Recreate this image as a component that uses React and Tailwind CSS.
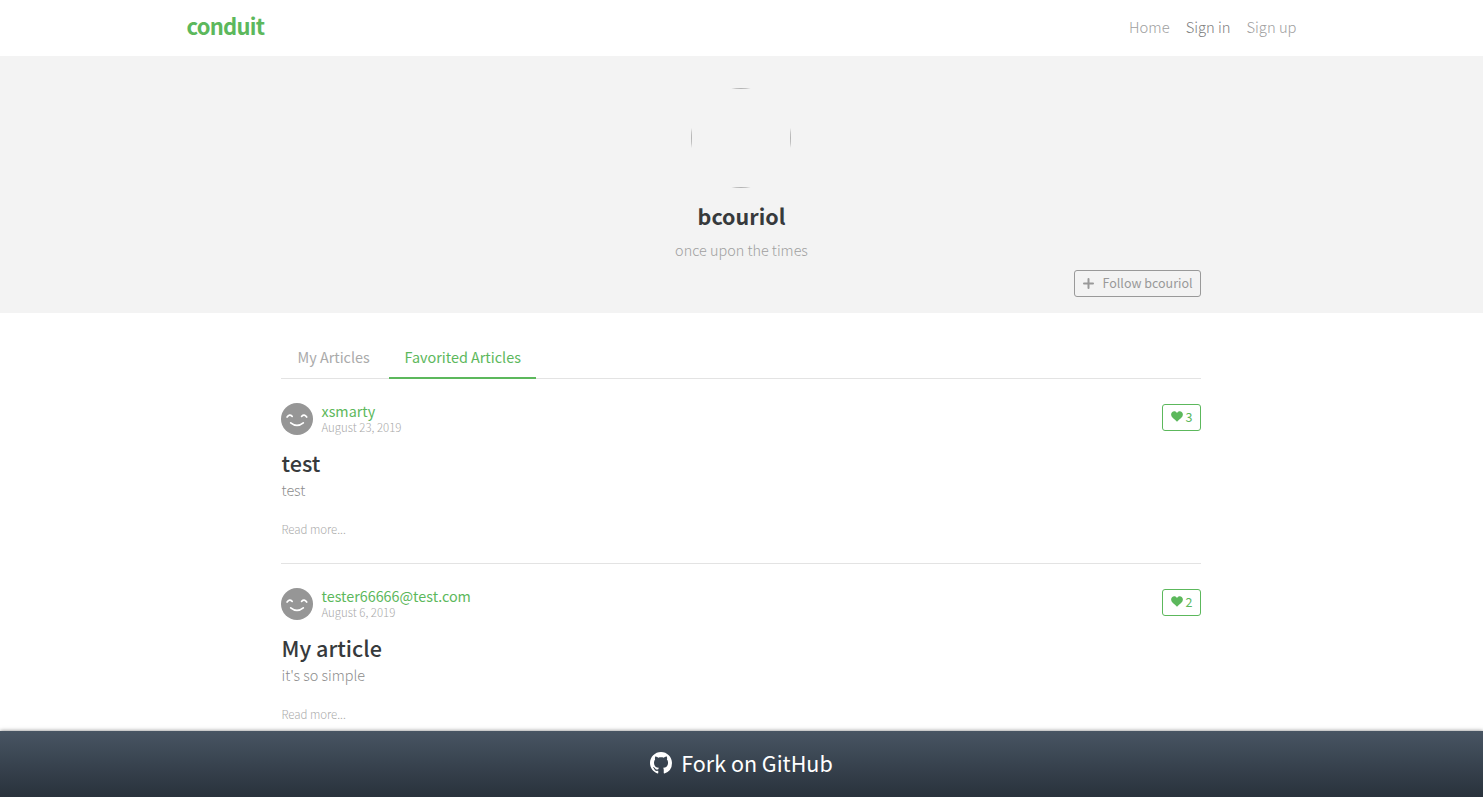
import React from 'react';

function GitHubMark() {
  return (
    <svg viewBox="0 0 16 16" fill="currentColor" className="-mt-[3px] ml-px mr-[9px] h-[22px] w-[22px]">
      <path d="M8 0C3.58 0 0 3.58 0 8c0 3.54 2.29 6.53 5.47 7.59.4.07.55-.17.55-.38 0-.19-.01-.82-.01-1.49-2.01.37-2.53-.49-2.69-.94-.09-.23-.48-.94-.82-1.13-.28-.15-.68-.52-.01-.53.63-.01 1.08.58 1.23.82.72 1.21 1.87.87 2.33.66.07-.52.28-.87.51-1.07-1.78-.2-3.64-.89-3.64-3.95 0-.87.31-1.59.82-2.15-.08-.2-.36-1.02.08-2.12 0 0 .67-.21 2.2.82.64-.18 1.32-.27 2-.27.68 0 1.36.09 2 .27 1.53-1.04 2.2-.82 2.2-.82.44 1.1.16 1.92.08 2.12.51.56.82 1.27.82 2.15 0 3.07-1.87 3.75-3.65 3.95.29.25.54.73.54 1.48 0 1.07-.01 1.93-.01 2.2 0 .21.15.46.55.38A8.013 8.013 0 0016 8c0-4.42-3.58-8-8-8z" />
    </svg>
  );
}

function Smiley() {
  return (
    <svg viewBox="0 0 32 32" className="block h-8 w-8 shrink-0">
      <circle cx="16" cy="16" r="16" fill="#969696" />
      <g fill="none" stroke="#fff" strokeWidth="1.7" strokeLinecap="round">
        <path d="M6.1 14 Q8.4 10.7 11.2 13.3" />
        <path d="M20.6 13.3 Q23.4 10.7 25.7 14" />
        <path d="M9.7 19.9 Q16 25 22.3 19.9" />
      </g>
    </svg>
  );
}

function Heart() {
  return (
    <svg viewBox="0 0 12 11" className="block h-[11px] w-3" fill="#5cb85c">
      <path d="M6 2C5.3.7 4.4.2 3.3.2 1.5.2.1 1.6.1 3.5c0 2.6 2.3 3.9 3.9 5.3L6 10.8l2-2c1.6-1.4 3.9-2.7 3.9-5.3C11.9 1.6 10.5.2 8.7.2 7.6.2 6.7.7 6 2z" />
    </svg>
  );
}

function Article({ author, date, likes, title, body }) {
  return (
    <article className="h-[185px] border-t border-[#e3e3e3] pt-6">
      <div className="flex h-8 justify-between">
        <div className="flex">
          <Smiley />
          <div className="ml-[8.5px]">
            <div className="h-4 text-[14.35px] leading-[15px] text-[#5cb85c]">{author}</div>
            <div className="text-[11.45px] font-light leading-[16px] text-[#aaa]">{date}</div>
          </div>
        </div>
        <button className="mt-px flex h-[27px] w-[39px] items-center rounded-[3px] border border-[#5cb85c] pl-2 text-[12.5px] leading-none text-[#5cb85c]">
          <span className="-mt-[3px]"><Heart /></span>
          <span className="ml-[2.5px]">{likes}</span>
        </button>
      </div>
      <h2 className="mt-[14px] h-[27px] pl-[0.5px] text-[21.6px] font-medium leading-[27px] text-[#373a3c]">{title}</h2>
      <p className="mt-[2px] h-6 pl-[0.5px] text-[14.4px] font-light leading-6 text-[#8c8c8c]">{body}</p>
      <p className="mt-[17px] pl-[0.5px] text-[11.45px] font-light leading-[20px] text-[#aaa]">Read more...</p>
    </article>
  );
}

export default function App() {
  return (
    <div className="flex h-screen flex-col overflow-hidden bg-white font-['Noto_Sans_CJK_SC',sans-serif] text-[14.4px]">
      <nav className="h-14 shrink-0">
        <div className="mx-auto flex h-[54px] w-[1110px] items-center justify-between">
          <span className="-mt-1 text-[22px] font-bold tracking-[-0.75px] text-[#5cb85c]">conduit</span>
          <div className="flex gap-4 text-[14.75px] font-light text-[#a0a0a0]">
            <span>Home</span>
            <span className="text-[#808080]">Sign in</span>
            <span>Sign up</span>
          </div>
        </div>
      </nav>
      <header className="h-[257px] shrink-0 bg-[#f3f3f3] pt-8">
        <div className="mx-auto flex w-[921px] flex-col items-center pr-px">
          <div className="h-[100px] w-[100px]">
            <svg viewBox="0 0 100 100" className="block h-full w-full">
              <defs><clipPath id="round"><circle cx="50" cy="50" r="50" /></clipPath></defs>
              <rect x=".5" y=".5" width="99" height="99" fill="none" stroke="#b5b5b5" clipPath="url(#round)" />
            </svg>
          </div>
          <h1 className="ml-px mt-[15px] h-[26px] text-[21.5px] font-bold leading-[26px] text-[#373a3c]">bcouriol</h1>
          <p className="ml-px mt-[9px] h-6 font-light leading-6 text-[#a0a0a0]">once upon the times</p>
          <button className="mt-2 flex h-[27px] w-[127px] items-center self-end rounded-[3px] border border-[#999] pl-2 text-[12.5px] leading-none text-[#999]">
            <svg viewBox="0 0 11 11" className="-mt-px mr-[8.5px] h-[11px] w-[11px]" stroke="#999" strokeWidth="2" strokeLinecap="round"><path d="M5.5 1v9M1 5.5h9" /></svg>
            <span className="whitespace-nowrap">Follow bcouriol</span>
          </button>
        </div>
      </header>
      <main className="mx-auto min-h-0 w-[921px] flex-1 overflow-hidden pr-px pt-6">
        <div className="-mb-px flex h-[42px]">
          <span className="w-[108px] pl-[16.5px] pt-2 leading-6 text-[#aaa]">My Articles</span>
          <span className="relative z-10 h-[42px] w-[147px] border-b-2 border-[#5cb85c] pl-[15.5px] pt-2 leading-6 text-[#5cb85c]">Favorited Articles</span>
        </div>
        <Article author="xsmarty" date="August 23, 2019" likes="3" title="test" body="test" />
        <Article author="tester66666@test.com" date="August 6, 2019" likes="2" title="My article" body="it's so simple" />
      </main>
      <footer className="relative flex h-[66px] shrink-0 items-center justify-center bg-gradient-to-b from-[#485563] to-[#29323c] pr-px text-[21.5px] text-white shadow-[0_0_4px_rgba(0,0,0,0.5)]">
        <GitHubMark />
        <span className="-mt-px">Fork on GitHub</span>
      </footer>
    </div>
  );
}
